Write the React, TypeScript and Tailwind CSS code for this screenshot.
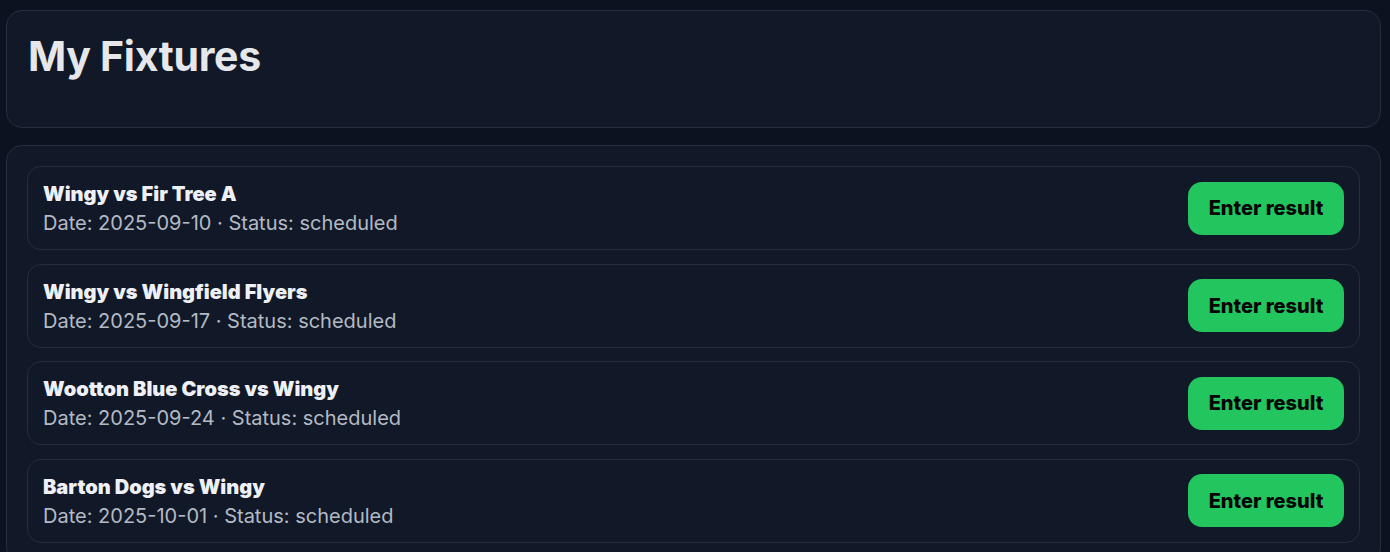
import React from "react";

const fixtures = [
  { title: "Wingy vs Fir Tree A", date: "2025-09-10" },
  { title: "Wingy vs Wingfield Flyers", date: "2025-09-17" },
  { title: "Wootton Blue Cross vs Wingy", date: "2025-09-24" },
  { title: "Barton Dogs vs Wingy", date: "2025-10-01" },
];

export default function App() {
  return (
    <div
      className="min-h-screen bg-[#0c1220] pl-[6px] pr-[9px] pt-[10px] pb-6 text-[#e5e7eb] flex flex-col gap-[17px]"
      style={{ fontFamily: "Inter, 'Noto Sans', sans-serif" }}
    >
      <div className="rounded-[16px] border border-[#262e3d] bg-[#111827] px-[21px] pt-[20px] h-[118px]">
        <h1 className="text-[41px] leading-[50px] font-bold tracking-[-0.3px] text-[#e5e7eb]">My Fixtures</h1>
      </div>
      <div className="rounded-[16px] border border-[#262e3d] bg-[#111827] p-[20px] flex flex-col gap-[13.67px]">
        {fixtures.map((f) => (
          <div
            key={f.title}
            className="rounded-[14px] border border-[#262e3d] bg-[#111827] px-[15px] h-[84px] flex items-center justify-between"
          >
            <div className="flex flex-col self-start pt-[15px]">
              <div className="text-[20px] leading-[24px] font-black text-[#eef0f6]">{f.title}</div>
              <div className="mt-[3px] text-[20px] leading-[28px] text-[#b4bac4]">
                Date: {f.date} · Status: scheduled
              </div>
            </div>
            <button className="h-[53px] w-[156px] rounded-[14px] bg-[#22c55e] text-[20px] font-extrabold text-[#050505]">
              Enter result
            </button>
          </div>
        ))}
      </div>
    </div>
  );
}
